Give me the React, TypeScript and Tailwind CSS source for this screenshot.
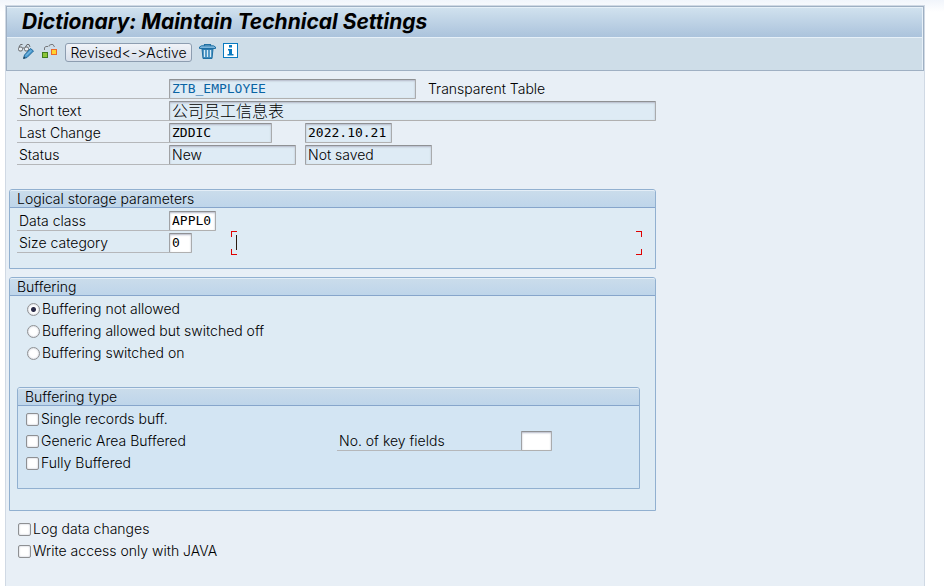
import { useId } from "react";
import type { InputHTMLAttributes, ReactNode } from "react";
import clsx from "clsx";

function Field({ className, mono, editable, ...rest }: { mono?: boolean; editable?: boolean } & InputHTMLAttributes<HTMLInputElement>) {
  return (
    <input
      type="text"
      readOnly={!editable}
      className={clsx(
        "h-5 min-w-0 rounded-[1px] border border-t-[#8f9194] border-r-[#a9abad] border-b-[#b0b0b0] border-l-[#a0a2a5] px-[2px] shadow-[inset_0_1px_2px_#b4b8c6] outline-none",
        editable ? "bg-white" : "bg-[#deebf5]",
        mono && "font-['DejaVu_Sans_Mono','Noto_Sans_CJK_SC',monospace] text-[13px]",
        className,
      )}
      {...rest}
    />
  );
}

function Row({ id, label, children }: { id: string; label: string; children: ReactNode }) {
  return (
    <div className="flex h-5">
      <label htmlFor={id} className="w-[152px] shrink-0 border-b border-[#b5b7ba] pl-[2px]">
        {label}
      </label>
      {children}
    </div>
  );
}

function Panel({ title, inner, className, children }: { title: string; inner?: boolean; className?: string; children: ReactNode }) {
  const headingId = useId();
  return (
    <section
      role="group"
      aria-labelledby={headingId}
      className={clsx("rounded-t-[3px] border border-[#91b0d0]", inner ? "bg-[#d3e5f3]" : "bg-[#deebf4]", className)}
    >
      <h2
        id={headingId}
        className="h-[18px] rounded-t-[2px] border-t border-b border-t-[#e4eef7] border-b-[#86a5cb] bg-linear-to-b from-[#cadceb] to-[#bed5ea] pl-[7px] leading-[15px]"
      >
        {title}
      </h2>
      {children}
    </section>
  );
}

function Choice({ type, label, name, checked }: { type: "radio" | "checkbox"; label: string; name?: string; checked?: boolean }) {
  return (
    <label className="flex h-5 items-center">
      <input
        type={type}
        name={name}
        defaultChecked={checked}
        className={clsx(
          "mr-[2px] size-[13px] shrink-0 appearance-none border border-[#8e9093] bg-white shadow-[inset_0_0_2px_#b4b8c6]",
          type === "radio"
            ? "rounded-full checked:bg-[radial-gradient(circle,#2b2b48_0,#2b2b48_2px,#ffffff_3px)]"
            : "rounded-[2px]",
        )}
      />
      {label}
    </label>
  );
}

function GlassesPencilIcon() {
  return (
    <svg width="18" height="17" viewBox="0 0 18 17" fill="none">
      <path d="M2 4 3.500 1.500H5.500M8.500 4 10 1.500H12L13 4M5.500 5h2" stroke="#66686b" />
      <rect x="1.500" y="4" width="4" height="4" rx="1.500" fill="#e6edf3" stroke="#66686b" />
      <rect x="7.500" y="4" width="4" height="4" rx="1.500" fill="#e6edf3" stroke="#66686b" />
      <path d="M6.500 15.500 7.500 12 13.500 5.500 16.500 8 10 14.500z" fill="#4b9bd0" stroke="#22699b" />
      <path d="M9 12.500 14 7.500" stroke="#93c8ea" />
      <path d="M6.300 15.700 7 13.500 8.600 15z" fill="#2d3a45" />
    </svg>
  );
}

function CompareIcon() {
  return (
    <svg width="17" height="17" viewBox="0 0 17 17" fill="none">
      <path d="M3.500 7V4.500L5 3.500H7M8 3.500V2.500L10 1.500H12L13.500 4" stroke="#77797c" />
      <rect x="1.500" y="9.500" width="5" height="5" fill="#8cc63a" stroke="#3f7d20" />
      <rect x="10.500" y="6.500" width="5" height="5" fill="#ffd22e" stroke="#ec6a2c" />
    </svg>
  );
}

function TrashIcon() {
  return (
    <svg width="17" height="17" viewBox="0 0 17 17" fill="none">
      <path d="M5.5 3V1.5h6V3" stroke="#1f6fa3" strokeWidth="1.2" />
      <path d="M0.5 5.5V4L2.500 2.800h12L16.500 4v1.500z" fill="#7db6dc" stroke="#1f6fa3" />
      <path d="M3 6h11l-1 9.5H4z" fill="#3e8bbd" stroke="#1f6fa3" />
      <path d="M5.5 7v7M8.5 7v7M11.5 7v7" stroke="#d8ebf7" strokeWidth="1.3" />
    </svg>
  );
}

function InfoIcon() {
  return (
    <svg width="15" height="15" viewBox="0 0 15 15">
      <rect x="0.5" y="0.5" width="14" height="14" fill="#fff" stroke="#0a7ac0" />
      <path d="M6 2h3v2.5H6zM5 6h4v5h1.500v1.500h-6V11H6V7.500H5z" fill="#0a7ac0" />
    </svg>
  );
}

export default function App() {
  return (
    <div className="flex min-h-screen flex-col bg-linear-to-b from-[#f1f5fb] to-white to-[12px] pt-[5px] pr-[19px] pl-[5px] font-['Inter','Noto_Sans_CJK_SC',sans-serif] text-[14px] leading-5 font-light text-black">
      <div className="flex grow flex-col border-x border-t border-[#d0d9e4] bg-[#e8eff6]">
        <header className="border border-[#9fb0c3] bg-[#cedde8]">
          <div className="h-[31px] border-t border-r border-b border-[#e6f0f8] bg-linear-to-b from-[#d0e1ee] to-[#abc3dc] pl-[15px]">
            <h1 className="text-[21px] leading-7 font-bold italic">Dictionary: Maintain Technical Settings</h1>
          </div>
          <div className="flex h-8 items-start border-r border-[#e6f0f8] pt-[5px] pl-[10px]">
            <button type="button" aria-label="Display / change">
              <GlassesPencilIcon />
            </button>
            <button type="button" aria-label="Compare versions" className="ml-[6px]">
              <CompareIcon />
            </button>
            <button
              type="button"
              className="ml-[7px] h-[19px] w-[127px] rounded-[3px] border border-[#8d9db0] bg-linear-to-b from-[#f0f3f8] to-[#d8dfea] leading-[18px] whitespace-nowrap [font-feature-settings:'calt'_0]"
            >
              Revised&lt;-&gt;Active
            </button>
            <button type="button" aria-label="Delete" className="ml-[7px]">
              <TrashIcon />
            </button>
            <button type="button" aria-label="Information" className="ml-[7px]">
              <InfoIcon />
            </button>
          </div>
        </header>

        <main className="w-full max-w-[650px] pt-2 pl-[3px]">
          <div className="flex flex-col gap-[2px] pl-2">
            <Row id="name" label="Name">
              <Field id="name" mono defaultValue="ZTB_EMPLOYEE" className="w-[247px] text-[#0a64a4]" />
              <span className="ml-3">Transparent Table</span>
            </Row>
            <Row id="short" label="Short text">
              <Field id="short" defaultValue="公司员工信息表" className="grow text-[16px]" />
            </Row>
            <Row id="changed" label="Last Change">
              <Field id="changed" mono defaultValue="ZDDIC" className="w-[103px]" />
              <Field aria-label="Change date" mono defaultValue="2022.10.21" className="ml-[33px] w-[87px]" />
            </Row>
            <Row id="status" label="Status">
              <Field id="status" defaultValue="New" className="w-[127px]" />
              <Field aria-label="Save status" defaultValue="Not saved" className="ml-[9px] w-[127px]" />
            </Row>
          </div>

          <Panel title="Logical storage parameters" className="mt-6 h-20">
            <div className="flex flex-col gap-[2px] pt-[3px] pl-[7px]">
              <Row id="class" label="Data class">
                <Field id="class" mono editable defaultValue="APPL0" className="w-[47px]" />
              </Row>
              <Row id="size" label="Size category">
                <Field id="size" mono editable defaultValue="0" className="w-[23px]" />
                <div className="relative -my-[2px] mr-[13px] ml-[39px] h-6 grow">
                  <i className="absolute top-0 left-0 size-[6px] border-t border-l border-[#e00000]" />
                  <i className="absolute bottom-0 left-0 size-[6px] border-b border-l border-[#e00000]" />
                  <i className="absolute top-0 right-0 size-[6px] border-t border-r border-[#e00000]" />
                  <i className="absolute right-0 bottom-0 size-[6px] border-r border-b border-[#e00000]" />
                  <i className="absolute top-1 left-[5px] h-[15px] w-px bg-[#2a1a10]" />
                </div>
              </Row>
            </div>
          </Panel>

          <Panel title="Buffering" className="mt-2 pb-[21px]">
            <div className="flex flex-col gap-[2px] pt-[3px] pl-[17px]">
              <Choice type="radio" name="buffering" label="Buffering not allowed" checked />
              <Choice type="radio" name="buffering" label="Buffering allowed but switched off" />
              <Choice type="radio" name="buffering" label="Buffering switched on" />
            </div>
            <Panel title="Buffering type" inner className="mt-6 mr-[15px] ml-[7px]">
              <div className="flex flex-col gap-[2px] pt-[3px] pb-[15px] pl-2">
                <Choice type="checkbox" label="Single records buff." />
                <div className="flex">
                  <div className="w-[311px]">
                    <Choice type="checkbox" label="Generic Area Buffered" />
                  </div>
                  <label htmlFor="keys" className="h-5 w-[184px] border-b border-[#b5b7ba] pl-[2px]">
                    No. of key fields
                  </label>
                  <Field id="keys" editable className="w-[31px]" />
                </div>
                <Choice type="checkbox" label="Fully Buffered" />
              </div>
            </Panel>
          </Panel>

          <div className="flex flex-col gap-[2px] pt-2 pl-[9px]">
            <Choice type="checkbox" label="Log data changes" />
            <Choice type="checkbox" label="Write access only with JAVA" />
          </div>
        </main>
      </div>
    </div>
  );
}
